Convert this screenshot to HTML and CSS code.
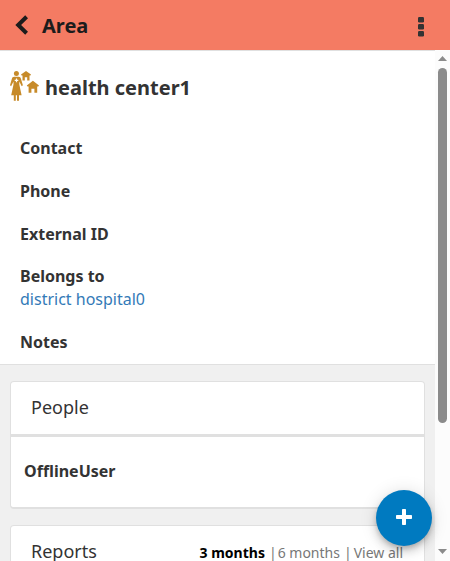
FILE: index.html
```html
<!DOCTYPE html>
<html lang="en">
<head>
<meta charset="utf-8">
<title>Area</title>
<link rel="stylesheet" href="styles.css">
</head>
<body>
<header class="header">
  <svg class="back" viewBox="0 0 14 20" width="14" height="20"><path d="M11.600 1.800 3.200 10l8.400 8.200" fill="none" stroke="#1c1c1c" stroke-width="4"/></svg>
  <h1 class="title">Area</h1>
  <svg class="more" viewBox="0 0 6 20" width="6" height="20" fill="#333"><rect y="0" width="6" height="5.400" rx="1.200"/><rect y="7" width="6" height="5.400" rx="1.200"/><rect y="14" width="6" height="5.400" rx="1.200"/></svg>
</header>
<div class="body">
  <main class="content">
    <section class="profile">
      <div class="heading">
        <svg class="icon" viewBox="0 0 30 30" width="30" height="30" fill="#c78b2a">
          <circle cx="6.400" cy="2.600" r="2.500"/>
          <path d="M4.200 5.800h4.400c1.400 0 2 .8 2.400 2.200l1.900 6.200-1.200 1.100-2.400-4.800v3.100l2.300 10.600H9v5.500H7v-5.500H5.800v5.500h-2v-5.500H1.200l2.300-10.600v-3.100l-2.400 4.800L0 14.200 1.800 8c.4-1.400 1-2.200 2.400-2.200z"/>
          <path d="M5.900 7.600h1.200v1.200h1.200v1.200H7.100v1.200H5.900V10H4.700V8.800h1.200z" fill="#fff"/>
          <path d="M16-.1l5 3.700-.6.9h-.9v4.900h-2.300V6.300h-2.400v3.100h-2.300V4.500h-.9l-.6-.9z"/>
          <path d="M22.900 9.700l6.100 4.700-.7 1.100h-1.100v6.200h-2.800v-3.900h-3v3.900h-2.800v-6.200h-1.100l-.7-1.100z"/>
        </svg>
        <h2 class="name">health center1</h2>
      </div>
      <div class="fields">
        <div class="label">Contact</div>
        <div class="label">Phone</div>
        <div class="label">External ID</div>
        <div class="label">Belongs to<a class="link">district hospital0</a></div>
        <div class="label">Notes</div>
      </div>
    </section>
    <section class="card people">
      <h3 class="card-title">People</h3>
      <div class="person">OfflineUser</div>
    </section>
    <section class="card reports">
      <h3 class="card-title">Reports</h3>
      <div class="filters"><b>3 months</b><span class="bar">|</span><span>6 months</span><span class="bar second">|</span><span>View all</span></div>
    </section>
  </main>
  <div class="scrollbar">
    <svg viewBox="0 0 9 5" width="9" height="5"><path d="M4.500 0 9 5H0z" fill="#8b8b8b"/></svg>
    <div class="track"><div class="thumb"></div></div>
    <svg viewBox="0 0 9 5" width="9" height="5"><path d="M4.500 5 9 0H0z" fill="#8b8b8b"/></svg>
  </div>
</div>
<button class="fab" aria-label="Add"><svg viewBox="0 0 16 16" width="16" height="16"><path d="M6.800 0h2.400q.8 0 .8.800V6h5.200q.8 0 .8.800v2.400q0 .8-.8.800H10v5.200q0 .8-.8.800H6.800q-.8 0-.8-.8V10H.8Q0 10 0 9.200V6.800Q0 6 .8 6H6V.8Q6 0 6.800 0z" fill="#fff"/></svg></button>
</body>
</html>
```
FILE: styles.css
```css
* { box-sizing: border-box; }
body {
  margin: 0;
  height: 561px;
  overflow: hidden;
  display: flex;
  flex-direction: column;
  font: 16px/22.86px "Noto Sans", sans-serif;
  color: #333;
  background: #fff;
}
h1, h2, h3 { margin: 0; }
.header {
  flex: 0 0 51px;
  display: flex;
  align-items: center;
  padding: 1px 26px 0 15px;
  background: #f47b63;
  border-bottom: 1px solid #e0e0e0;
}
.back { margin-top: -1px; }
.title {
  flex: 1;
  margin-left: 13px;
  font-size: 20px;
  line-height: 28px;
  color: #1c1c1c;
}
.more { margin-top: 2px; }
.body { flex: 1; min-height: 0; display: flex; }
.content {
  flex: 1;
  overflow: hidden;
  background: #f0f0f0;
}
.profile {
  height: 314px;
  background: #fff;
  border-bottom: 1px solid #e0e0e0;
}
.heading {
  display: flex;
  align-items: flex-start;
  padding: 20px 10px 0;
  height: 85.8px;
}
.icon { overflow: visible; }
.name {
  margin: 3px 0 0 5px;
  font-size: 20px;
  line-height: 28px;
}
.fields {
  display: flex;
  flex-direction: column;
  gap: 20px;
  padding: 0 20px;
}
.label { font-weight: 700; }
.link {
  display: block;
  font-weight: 400;
  color: #337ab7;
}
.card {
  margin: 16px 10px 0;
  background: #fff;
  border: 1px solid #e0e0e0;
  border-bottom-width: 2px;
  border-radius: 4px;
}
.card-title {
  font-size: 18px;
  font-weight: 400;
  line-height: 26px;
}
.people { height: 128px; }
.people .card-title {
  height: 55px;
  padding: 12px 20px 0;
  border-bottom: 3px solid #e0e0e0;
}
.person {
  padding: 23px 13px;
  font-weight: 700;
}
.reports {
  display: flex;
  justify-content: space-between;
  height: 80px;
  padding: 12px 21px 0 20px;
}
.filters {
  display: flex;
  padding-top: 3px;
  font-size: 14px;
  line-height: 24px;
  color: #777;
}
.filters b { color: #000; }
.bar { margin: 0 1px 0 4px; }
.bar.second { margin-right: 2px; }
.scrollbar {
  width: 15px;
  margin-top: -1px;
  display: flex;
  flex-direction: column;
  align-items: center;
  padding: 6px 0 7px;
  background: #fcfcfc;
}
.track { flex: 1; padding-top: 7px; }
.thumb {
  width: 9px;
  height: 355px;
  border-radius: 5px;
  background: #8b8b8b;
}
.fab {
  position: absolute;
  left: 376px;
  top: 490px;
  width: 56px;
  height: 56px;
  display: flex;
  align-items: center;
  justify-content: center;
  padding: 0 0 2px;
  border: 0;
  border-radius: 50%;
  background: #007ac0;
  box-shadow: 0 3px 5px -1px rgba(0,0,0,.2), 0 6px 10px rgba(0,0,0,.14), 0 1px 18px rgba(0,0,0,.12);
}
```
